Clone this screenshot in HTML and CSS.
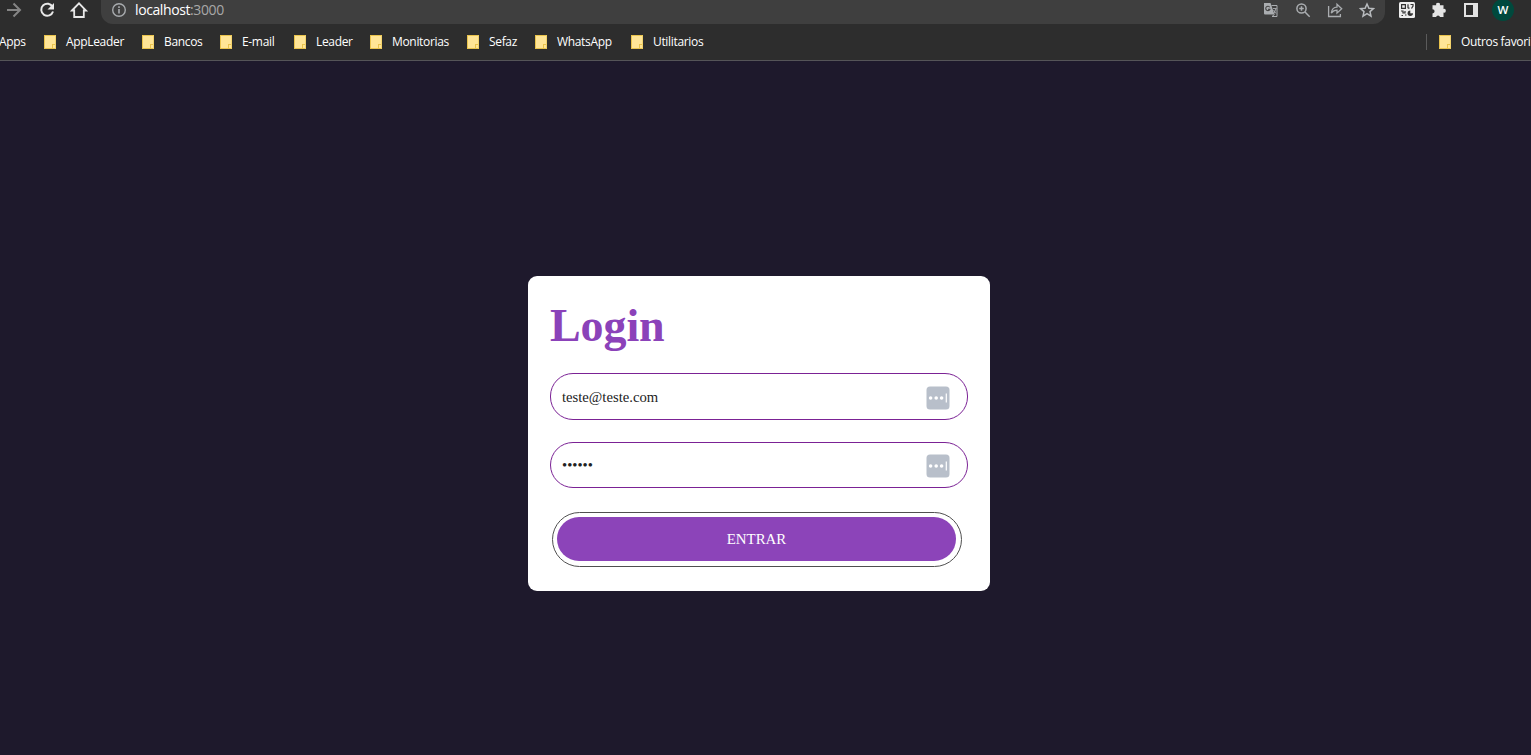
FILE: index.html
```html
<!DOCTYPE html>
<html lang="pt-BR">
<head>
<meta charset="utf-8">
<title>Login</title>
<link rel="stylesheet" href="styles.css">
</head>
<body>
<header class="browser">
  <div class="toolbar">
    <nav class="nav">
      <svg width="25" height="24" viewBox="0 0 25 24" fill="none" stroke="#858585" stroke-width="2"><path d="M8 10h13M14.500 3.500l6.500 6.500-6.500 6.500"/></svg>
      <svg width="20" height="24" viewBox="0 0 20 24"><path d="M15.600 7A6 6 0 1 0 16 11.500" fill="none" stroke="#e8e8e8" stroke-width="2"/><path d="M17 3v6.500h-6.500z" fill="#e8e8e8"/></svg>
      <svg width="20" height="24" viewBox="0 0 20 24"><path d="M3 10.500L10 3.400l7 7.100h-2.200V17H5.200v-6.500z" fill="none" stroke="#e8e8e8" stroke-width="1.800"/></svg>
    </nav>
    <div class="address">
      <svg width="16" height="24" viewBox="0 0 16 24"><circle cx="8" cy="10" r="6.300" fill="none" stroke="#a8abae" stroke-width="1.400"/><path d="M8 9v4.500M8 6.200v1.700" stroke="#a8abae" stroke-width="1.600"/></svg>
      <span class="url">localhost<span class="port">:3000</span></span>
      <div class="page-actions">
        <svg width="16" height="24" viewBox="0 0 16 24"><path d="M1 3h6.500l4 11.500H2q-1 0-1-1z" fill="#aaadb0"/><path d="M8.500 5.500H14v11H9l2.500-2" fill="none" stroke="#aaadb0"/><path d="M6.800 7.200a2.200 2.200 0 1 0 .2 2H5" fill="none" stroke="#444" stroke-width="1.100"/><path d="M10 8.500h3.500M11 13.500l2-5M10.500 10l2.500 3.500" fill="none" stroke="#aaadb0" stroke-width=".9"/></svg>
        <svg width="16" height="24" viewBox="0 0 16 24" fill="none" stroke="#aaadb0" stroke-width="1.500"><circle cx="6.500" cy="8.500" r="4.600"/><path d="M10 12l4.700 4.700M4.200 8.500h4.600M6.500 6.200v4.600"/></svg>
        <svg width="16" height="24" viewBox="0 0 16 24" fill="none" stroke="#aaadb0" stroke-width="1.300"><path d="M1.600 6v10.500h11.800V14M4.300 13.200c.5-4 2.500-6 5.700-6V4.300l4.700 4.400-4.700 4.400v-3c-3 0-4.300 1-5.700 3.100z"/></svg>
        <svg width="16" height="24" viewBox="0 0 16 24" fill="none" stroke="#b8bbbe" stroke-width="1.500"><path d="M8 4l1.900 4.200 4.500.4-3.400 3 1 4.500-4-2.400-4 2.400 1-4.500-3.400-3 4.500-.4z"/></svg>
      </div>
    </div>
    <div class="extensions">
      <svg width="16" height="24" viewBox="0 0 16 24"><rect y="2" width="16" height="16" rx="1.500" fill="#eee"/><g fill="none" stroke="#333" stroke-width="1.200"><path d="M2.600 4.600h3.800v3.800H2.600zM9 4.200v4M9 8.200h1.500M11.500 4.500H14V6l-1.500 2.500M2 11h2v2h2v-2M2.500 15.500H4M6 15h1.500"/></g><circle cx="11.300" cy="13.300" r="2.700" fill="#333"/><path d="M11.300 13.300V10h3v3.300z" fill="#eee"/></svg>
      <svg width="16" height="24" viewBox="0 0 16 24"><path d="M1.500 5.200h3.700a1.900 1.900 0 1 1 3.700 0h3.600v3.700a1.900 1.900 0 1 1 0 3.700V17H9a2 2 0 0 0-3.900 0H1.500v-3.600a2.100 2.100 0 0 0 0-4.200z" fill="#e3e3e3"/></svg>
      <svg width="16" height="24" viewBox="0 0 16 24"><path d="M1 3h14v14H1zM3 5v10h7V5z" fill="#e3e3e3" fill-rule="evenodd"/></svg>
      <span class="avatar">W</span>
    </div>
  </div>
  <div class="bookmarks">
    <span class="apps">Apps</span>
    <a class="mark"><i class="folder"></i><span class="appleader">AppLeader</span></a>
    <a class="mark"><i class="folder"></i><span class="bancos">Bancos</span></a>
    <a class="mark"><i class="folder"></i><span class="email">E-mail</span></a>
    <a class="mark"><i class="folder"></i><span class="leader">Leader</span></a>
    <a class="mark"><i class="folder"></i><span class="monitorias">Monitorias</span></a>
    <a class="mark"><i class="folder"></i><span class="sefaz">Sefaz</span></a>
    <a class="mark"><i class="folder"></i><span class="whatsapp">WhatsApp</span></a>
    <a class="mark"><i class="folder"></i><span class="utilitarios">Utilitarios</span></a>
    <a class="mark other"><i class="folder"></i><span>Outros favori</span></a>
  </div>
</header>
<main class="page">
  <form class="card">
    <h1 class="title">Login</h1>
    <div class="field field-email">
      <span>teste@teste.com</span>
      <svg width="24" height="24" viewBox="0 0 24 24"><rect x=".5" y=".5" width="23" height="23" rx="3.500" fill="#b8bfca"/><g fill="#fff"><circle cx="4.600" cy="12" r="1.800"/><circle cx="10.200" cy="12" r="1.800"/><circle cx="15.600" cy="12" r="1.800"/><path d="M19.700 7.500h1.200v9h-1.200z"/></g></svg>
    </div>
    <div class="field field-password">
      <span class="dots">••••••</span>
      <svg width="24" height="24" viewBox="0 0 24 24"><rect x=".5" y=".5" width="23" height="23" rx="3.500" fill="#b8bfca"/><g fill="#fff"><circle cx="4.600" cy="12" r="1.800"/><circle cx="10.200" cy="12" r="1.800"/><circle cx="15.600" cy="12" r="1.800"/><path d="M19.700 7.500h1.200v9h-1.200z"/></g></svg>
    </div>
    <div class="focus-ring"><button class="submit" type="button">ENTRAR</button></div>
  </form>
</main>
</body>
</html>
```
FILE: styles.css
```css
* { box-sizing: border-box; }
body {
  margin: 0;
  height: 755px;
  overflow: hidden;
  background: #1e192c;
  font-family: "Liberation Serif", serif;
}
svg { display: block; flex: none; }
.browser {
  height: 61px;
  background: #2d2d2d;
  border-bottom: 1px solid #555458;
  color: #fff;
  font-family: "Open Sans", "Noto Sans", sans-serif;
  overflow: hidden;
}
.toolbar { display: flex; height: 24px; }
.nav { display: flex; gap: 12px; width: 101px; }
.address {
  display: flex;
  align-items: flex-start;
  width: 1284px;
  height: 24px;
  padding-left: 10px;
  background: #3f3f3f;
  border-radius: 0 0 12px 12px;
}
.url { margin-left: 8px; font-size: 14px; line-height: 20px; letter-spacing: -.4px; }
.port { color: #a8a8a8; }
.page-actions { display: flex; gap: 16px; margin-left: auto; padding-right: 10px; }
.extensions { display: flex; gap: 16px; padding-left: 14px; }
.avatar {
  width: 22px;
  height: 22px;
  margin: -1px 0 0 -3px;
  border-radius: 50%;
  background: #00493d;
  font-size: 11.5px;
  font-weight: 600;
  line-height: 22px;
  text-align: center;
}
.nav svg:first-child { margin-left: -1px; margin-right: 1px; }
.bookmarks {
  display: flex;
  align-items: center;
  height: 36px;
  font-size: 12px;
  line-height: 16px;
  white-space: nowrap;
}
.apps { width: 26px; letter-spacing: -.3px; text-indent: -1px; }
.mark { display: flex; align-items: center; gap: 10px; margin-left: 18px; }
.mark span { letter-spacing: -.33px; }
.folder {
  width: 12px;
  height: 14px;
  flex: none;
  background: linear-gradient(#ffe596, #ffe596) right bottom / 2px 3px no-repeat, linear-gradient(#e9c34c, #e9c34c) right bottom / 3px 4px no-repeat, #ffe596;
  border: 1px solid #e9c34c;
  border-right-color: #f3d36c;
}
.appleader { width: 58px; }
.bancos { width: 38px; }
.email { width: 34px; }
.leader { width: 36px; }
.monitorias { width: 57px; }
.sefaz { width: 28px; }
.whatsapp { width: 56px; }
.utilitarios { width: 51px; }
.other {
  width: 105px;
  height: 16px;
  margin-left: auto;
  padding-left: 12px;
  border-left: 1px solid #5b5b5b;
}
.page { padding: 215px 0 0 528px; }
.card {
  width: 462px;
  height: 315px;
  padding: 22px;
  background: #fff;
  border-radius: 9px;
}
.title {
  height: 75px;
  margin: 0;
  color: #8b42b9;
  font-size: 46px;
  line-height: 55px;
  letter-spacing: -.1px;
}
.field {
  display: flex;
  align-items: center;
  justify-content: space-between;
  width: 418px;
  padding: 2px 17px 0 11px;
  border: 1px solid #7b2295;
  border-radius: 23px;
  color: #222;
  font-size: 14.67px;
}
.field-email { height: 47px; }
.field-password { height: 46px; margin-top: 22px; }
.dots { padding-bottom: 2px; }
.focus-ring {
  width: 410px;
  height: 55px;
  margin: 24px 0 0 2px;
  padding: 4px 5px 5px 4px;
  border: 1px solid #505050;
  border-radius: 28px;
}
.submit {
  display: block;
  width: 100%;
  height: 44px;
  padding: 0;
  border: 0;
  border-radius: 22px;
  background: #8c44b9;
  color: #fff;
  font: 14.9px "Liberation Serif", serif;
}
```
